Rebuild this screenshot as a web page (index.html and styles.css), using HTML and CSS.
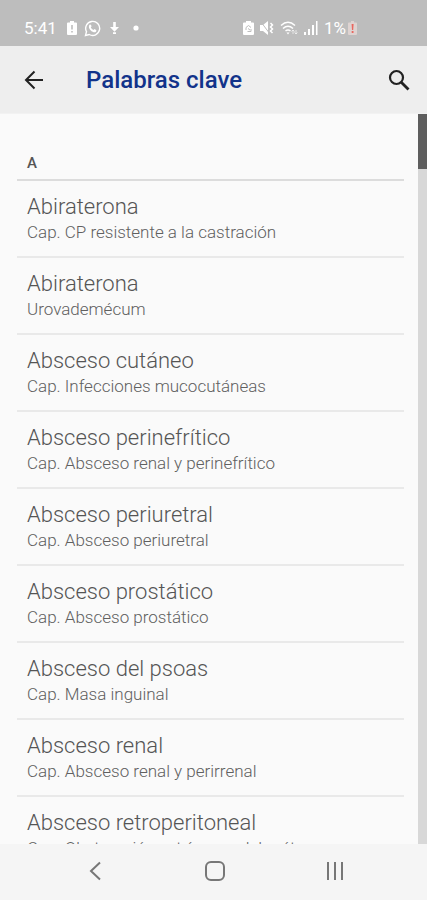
FILE: index.html
```html
<!DOCTYPE html>
<html lang="es">
<head>
<meta charset="utf-8">
<meta name="viewport" content="width=device-width, initial-scale=1">
<title>Palabras clave</title>
<link rel="stylesheet" href="styles.css">
</head>
<body>
<div class="screen">
  <div class="status">
    <div class="status-group">
      <span>5:41</span>
      <svg class="battery-alert" width="10" height="14" viewBox="0 0 10 14"><path fill="#fff" fill-rule="evenodd" d="M3 0h4v1.500h2q1 0 1 1V13q0 1-1 1H1q-1 0-1-1V2.500q0-1 1-1h2zM4.200 4h1.600v4.500H4.200zM4.200 10h1.600v1.600H4.200z"/></svg>
      <svg class="whatsapp" width="17" height="17" viewBox="0 0 17 17"><path d="M1.500 15.500l1-3.800A7 7 0 1 1 5.200 14.500z" fill="none" stroke="#fff" stroke-width="1.400"/><path d="M5.500 4.800c.6-.6 1.200-.5 1.500.1l.6 1.400-.8 1.100c.6 1.200 1.500 2 2.700 2.600l1-.9 1.600.8c.6.4.3 1.300-.2 1.800-1.200 1-3 .5-4.900-1C5 9.200 4.200 6.300 5.500 4.800z" fill="#fff"/></svg>
      <svg class="download" width="9" height="12" viewBox="0 0 9 12"><path fill="#fff" d="M3.200 0h2.600v5H9L4.500 9.800 0 5h3.200zM3 10.300h3V12H3z"/></svg>
      <svg class="dot" width="6" height="6" viewBox="0 0 6 6"><circle cx="3" cy="3" r="2.600" fill="#fff"/></svg>
    </div>
    <div class="status-group status-right">
      <svg width="11" height="14" viewBox="0 0 11 14"><path fill="#fff" d="M3 0h5v1.500h2q1 0 1 1V13q0 1-1 1H1q-1 0-1-1V2.500q0-1 1-1h2z"/><path d="M3 9V6.500l2.500-2L8 6.500M8 8v2.500H4.500M5 7.500l2 1.500" fill="none" stroke="#bdbdbd"/></svg>
      <svg class="mute" width="14" height="14" viewBox="0 0 14 14"><path fill="#fff" d="M0 4h3l5-4v14L3 10H0z"/><path d="M1 1l9 12" stroke="#bdbdbd" stroke-width="1"/><path d="M10.500 2l2 2-2 2 2 2-2 2 2 2" fill="none" stroke="#fff" stroke-width="1.500"/></svg>
      <svg class="wifi" width="18" height="14" viewBox="0 0 18 14"><path d="M1 4.500q7-6.500 14 0M3 7.500q5-4.500 10 0M5.500 10q2.500-2 5 0" fill="none" stroke="#fff" stroke-width="1.500"/><path fill="#fff" d="M6.500 11.500h3L8 13.500z"/><path d="M13 13V9m-1.500 1.500L13 9l1.500 1.500M16 9v4m-1.500-1.500L16 13l1.500-1.500" fill="none" stroke="#fff" stroke-opacity=".6"/></svg>
      <svg class="signal" width="14" height="14" viewBox="0 0 14 14"><path fill="#fff" d="M0 11h2v3H0zM4 8h2v6H4zM8 4h2v10H8zM12 0h1.500v14H12z"/></svg>
      <span>1%</span>
      <svg class="low" width="9" height="14" viewBox="0 0 9 14"><path fill="#ded3d1" d="M3 0h3v1.500h2q1 0 1 1V13q0 1-1 1H1q-1 0-1-1V2.500q0-1 1-1h2z"/><path fill="#e9665f" d="M3.600 3h2l-.4 6H4zM3.700 10h1.800v2H3.700z"/></svg>
    </div>
  </div>

  <header class="bar">
    <button class="icon-button" type="button" aria-label="Atrás">
      <svg width="20" height="20" viewBox="0 0 20 20" fill="none" stroke="#222" stroke-width="2"><path d="M19 10H2M10.500 1.500L2 10l8.500 8.500"/></svg>
    </button>
    <h1>Palabras clave</h1>
    <button class="icon-button search" type="button" aria-label="Buscar">
      <svg width="22" height="22" viewBox="0 0 22 22" fill="none" stroke="#222"><circle cx="8.500" cy="8.500" r="6.500" stroke-width="2.200"/><path d="M13 13l7.500 7.500" stroke-width="2.800"/></svg>
    </button>
  </header>

  <div class="content">
    <main class="keywords">
      <h2>A</h2>
      <ul>
        <li><a href="#"><strong>Abiraterona</strong><span>Cap. CP resistente a la castración</span></a></li>
        <li><a href="#"><strong>Abiraterona</strong><span>Urovademécum</span></a></li>
        <li><a href="#"><strong>Absceso cutáneo</strong><span>Cap. Infecciones mucocutáneas</span></a></li>
        <li><a href="#"><strong>Absceso perinefrítico</strong><span>Cap. Absceso renal y perinefrítico</span></a></li>
        <li><a href="#"><strong>Absceso periuretral</strong><span>Cap. Absceso periuretral</span></a></li>
        <li><a href="#"><strong>Absceso prostático</strong><span>Cap. Absceso prostático</span></a></li>
        <li><a href="#"><strong>Absceso del psoas</strong><span>Cap. Masa inguinal</span></a></li>
        <li><a href="#"><strong>Absceso renal</strong><span>Cap. Absceso renal y perirrenal</span></a></li>
        <li><a href="#"><strong>Absceso retroperitoneal</strong><span>Cap. Obstrucción extrínseca del uréter</span></a></li>
      </ul>
    </main>
    <div class="track"><div class="thumb"></div></div>
  </div>

  <nav class="system-nav">
    <button type="button" aria-label="Volver"><svg width="12" height="20" viewBox="0 0 12 20" fill="none" stroke="#777" stroke-width="2"><path d="M11 1.500L2 10l9 8.500"/></svg></button>
    <button type="button" aria-label="Inicio"><svg width="20" height="20" viewBox="0 0 20 20" fill="none" stroke="#777" stroke-width="2"><rect x="1" y="1" width="18" height="18" rx="5"/></svg></button>
    <button type="button" aria-label="Recientes"><svg width="18" height="18" viewBox="0 0 18 18" fill="none" stroke="#777" stroke-width="2"><path d="M2 0v18M9 0v18M16 0v18"/></svg></button>
  </nav>
</div>
</body>
</html>
```
FILE: styles.css
```css
* {
  box-sizing: border-box;
}

body {
  margin: 0;
  font-family: Roboto, "Liberation Sans", sans-serif;
  background: #fafafa;
}

button {
  border: 0;
  padding: 0;
  background: none;
}

svg {
  display: block;
  flex: none;
}

.screen {
  display: flex;
  flex-direction: column;
  height: 100vh;
}

.status {
  display: flex;
  justify-content: space-between;
  flex: none;
  height: 46px;
  padding: 11px 70px 0 24px;
  background: #bdbdbd;
  color: #fff;
  font-size: 17px;
  line-height: 34px;
}

.status-group {
  display: flex;
  align-items: center;
  height: 34px;
}

.battery-alert {
  margin-left: 10px;
}

.whatsapp {
  margin-left: 7px;
}

.download {
  margin-left: 9px;
}

.dot {
  margin-left: 14px;
}

.status-right {
  gap: 6px;
}

.status-right .low {
  margin-left: -4px;
}

.bar {
  display: flex;
  align-items: center;
  flex: none;
  height: 68px;
  padding: 1px 12px 0 10px;
  background: #eee;
  border-bottom: 1px solid #f2f2f2;
}

.icon-button {
  display: grid;
  place-items: center;
  width: 48px;
  height: 48px;
}

.search {
  width: 32px;
}

h1 {
  flex: 1;
  margin: 0 0 0 28px;
  color: #12338a;
  font-size: 24px;
  font-weight: 500;
  line-height: 32px;
}

.content {
  display: flex;
  flex: 1;
  min-height: 0;
  overflow: hidden;
}

.keywords {
  flex: 1;
  padding: 38px 14px 0 17px;
}

h2 {
  margin: 0;
  padding: 0 10px 5px;
  border-bottom: 2px solid #dcdcdc;
  color: #555;
  font-size: 15px;
  font-weight: 500;
  line-height: 22px;
}

ul {
  margin: 0;
  padding: 0;
  list-style: none;
}

li {
  border-bottom: 2px solid #e9e9e9;
}

li a {
  display: block;
  height: 75px;
  padding: 12px 10px 0;
  color: #606060;
  text-decoration: none;
}

li strong,
li span {
  display: block;
  font-weight: 300;
}

li strong {
  color: #555;
  font-size: 22px;
  line-height: 28px;
}

li span {
  font-size: 17px;
  line-height: 22px;
}

.track {
  width: 9px;
  background: #d8d8d8;
}

.thumb {
  height: 55px;
  background: #5e5e5e;
}

.system-nav {
  display: flex;
  flex: none;
  justify-content: center;
  height: 56px;
  padding-left: 3px;
  background: #f5f5f5;
}

.system-nav button {
  display: grid;
  place-items: center;
  width: 120px;
  height: 54px;
}
```
